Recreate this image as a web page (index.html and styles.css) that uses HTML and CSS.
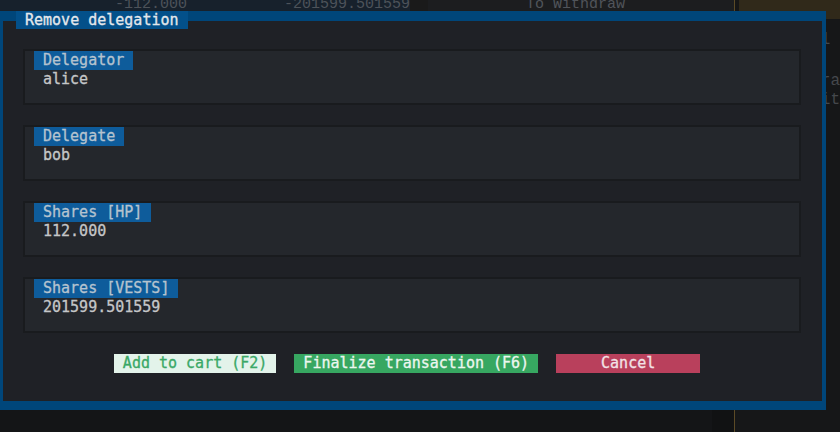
FILE: index.html
```html
<!DOCTYPE html>
<html>
<head>
<meta charset="utf-8">
<link rel="stylesheet" href="styles.css">
</head>
<body>
<div class="screen">
  <div class="col col-a">
    <div class="head head-a"><span class="num n1">-112.000</span><span class="num n2">-201599.501559</span></div>
    <div class="body"></div>
  </div>
  <div class="col col-b">
    <div class="head head-b"><span class="strip"></span><span class="hd-text">To Withdraw</span></div>
    <div class="body body-b"><span class="dark-end"></span></div>
  </div>
  <div class="sep"></div>
  <div class="col col-c">
    <div class="head head-c"></div>
    <div class="body body-c">
      <div class="ghost g1">l</div>
      <div class="ghost g2">ra</div>
      <div class="ghost g3">it</div>
    </div>
  </div>
</div>

<div class="dialog">
  <div class="dialog-title">Remove delegation</div>
  <div class="fields">
    <div class="field">
      <div class="field-label">Delegator</div>
      <div class="field-value">alice</div>
    </div>
    <div class="field">
      <div class="field-label">Delegate</div>
      <div class="field-value">bob</div>
    </div>
    <div class="field">
      <div class="field-label">Shares [HP]</div>
      <div class="field-value">112.000</div>
    </div>
    <div class="field">
      <div class="field-label">Shares [VESTS]</div>
      <div class="field-value">201599.501559</div>
    </div>
  </div>
  <div class="actions">
    <div class="btn btn-cart">Add to cart (F2)</div>
    <div class="btn btn-final">Finalize transaction (F6)</div>
    <div class="btn btn-cancel">Cancel</div>
  </div>
</div>
</body>
</html>
```
FILE: styles.css
```css
* { box-sizing: border-box; }
html, body {
  margin: 0;
  padding: 0;
}
body {
  width: 840px;
  height: 432px;
  overflow: hidden;
  position: relative;
  background: #141517;
  font-family: "DejaVu Sans Mono", monospace;
  font-size: 15px;
}

/* background screen (dimmed by the modal) */
.screen {
  display: flex;
  height: 432px;
}
.col {
  display: flex;
  flex-direction: column;
}
.col-a { width: 412px; }
.col-b { width: 328px; }
.sep { width: 1px; background: #5b4a26; }
.col-c { flex: 1; }
.head {
  height: 19px;
  display: flex;
  overflow: hidden;
  font-family: "Liberation Mono", monospace;
  color: #4d535a;
  line-height: 19px;
}
.head-a { background: #17212c; }
.num { margin-top: -5px; }
.n1 { margin-left: 115px; }
.n2 { margin-left: 97px; }
.head-b { background: #1c1d1f; color: #50545a; }
.strip { width: 18px; background: #1a1a1a; }
.hd-text { margin-left: 98px; margin-top: -5px; }
.head-c { background: #30291a; border-left: 4px solid #161616; }
.body { flex: 1; background: #141517; }
.body-b { display: flex; justify-content: flex-end; }
.dark-end { width: 22px; background: #111213; }
.body-c {
  background: #161718;
  padding-left: 86px;
  font-family: "Liberation Mono", monospace;
  color: #45484c;
  font-size: 16px;
}
.ghost { line-height: 19px; }
.g1 { margin-top: 12px; }
.g2 { margin-top: 22px; }
.g3 { margin-top: 0; }

/* modal dialog */
.dialog {
  position: absolute;
  left: 0;
  top: 11px;
  width: 826px;
  height: 399px;
  background: #1f2126;
  border-style: solid;
  border-color: #00467a;
  border-width: 10px 4px 9px 3px;
  padding: 28px 21px 0 20px;
  -webkit-text-stroke: 0.3px currentColor;
}
.dialog-title {
  position: absolute;
  left: 13px;
  top: -10px;
  height: 18px;
  line-height: 18px;
  padding: 0 9px;
  background: #03508a;
  color: #e4e8ec;
}
.fields {
  display: flex;
  flex-direction: column;
  gap: 20px;
}
.field {
  height: 56px;
  border: 2px solid #191b1e;
  background: #24272c;
}
.field-label {
  display: inline-block;
  margin-top: -2px;
  margin-left: 9px;
  padding: 0 9px;
  height: 18.5px;
  line-height: 18.5px;
  background: #0e5c9b;
  color: #b5c3cf;
}
.field-value {
  padding-left: 18px;
  line-height: 18.8px;
  color: #c4c6c8;
}
.actions {
  display: flex;
  justify-content: center;
  gap: 18px;
  margin-top: 21px;
  padding-right: 10px;
}
.btn {
  height: 19px;
  line-height: 19px;
  padding: 0 9px;
  text-align: center;
}
.btn-cart { background: #e3f3ea; color: #3aa866; }
.btn-final { background: #37a761; color: #ecf6ef; }
.btn-cancel { background: #b9405c; color: #f2e2e6; width: 144px; }
```
